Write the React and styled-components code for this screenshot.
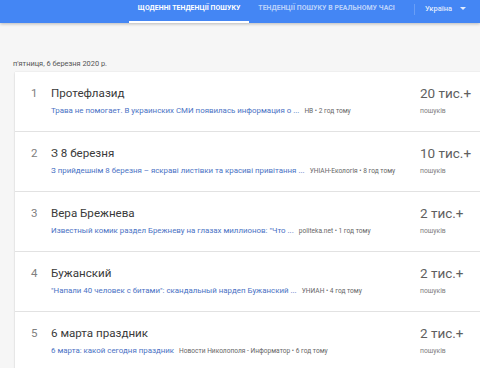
import React from 'react';
import styled, { createGlobalStyle } from 'styled-components';

const GlobalStyle = createGlobalStyle`
  body {
    margin: 0;
    background: #f6f6f6;
    font-family: Roboto, "Liberation Sans", Arial, sans-serif;
    overflow: hidden;
  }
`;

const Page = styled.div`
  width: 480px;
  height: 368px;
  overflow: hidden;
`;

const Header = styled.div`
  height: 23px;
  background: #4486f4;
  display: flex;
  align-items: stretch;
  padding-right: 14px;
  box-shadow: 0 1px 3px rgba(0, 0, 0, 0.25);
  position: relative;
  z-index: 1;
`;

const Spacer = styled.div`
  flex: 1;
`;

const Tab = styled.div`
  display: flex;
  align-items: center;
  padding: 0 9px 6px;
  font-size: 6.9px;
  font-weight: 700;
  letter-spacing: 0.05px;
  text-transform: uppercase;
  white-space: nowrap;
  color: ${({ active }) => (active ? '#ffffff' : 'rgba(255,255,255,0.65)')};
  border-bottom: 2px solid ${({ active }) => (active ? '#ffffff' : 'transparent')};
  box-sizing: border-box;
`;

const Divider = styled.div`
  width: 1px;
  margin: 4px 10px 8px;
  background: rgba(255, 255, 255, 0.2);
`;

const Region = styled.div`
  display: flex;
  align-items: center;
  gap: 8px;
  padding-bottom: 6px;
  font-size: 7.5px;
  font-weight: 500;
  color: rgba(255, 255, 255, 0.85);
`;

const Caret = styled.span`
  width: 0;
  height: 0;
  border-left: 3px solid transparent;
  border-right: 3px solid transparent;
  border-top: 3px solid rgba(255, 255, 255, 0.85);
`;

const Content = styled.div`
  padding: 35px 0 0 15px;
`;

const DateLabel = styled.div`
  font-size: 7.4px;
  color: #555;
  margin: 0 0 2px -2px;
  line-height: 12px;
`;

const Card = styled.div`
  background: #fff;
  margin-right: -10px;
  box-shadow: 0 1px 2px rgba(0, 0, 0, 0.12), 0 0 1px rgba(0, 0, 0, 0.12);
`;

const Row = styled.div`
  display: grid;
  grid-template-columns: 20px 1fr 70px;
  padding: 13px 0 14px 16px;
  border-bottom: 1px solid #e2e2e2;
  height: 60px;
  box-sizing: border-box;
`;

const Rank = styled.div`
  font-size: 11.5px;
  line-height: 16px;
  color: #808080;
`;

const Main = styled.div`
  min-width: 0;
`;

const Title = styled.div`
  font-size: 11.6px;
  line-height: 16px;
  color: #3a3a3a;
  margin-bottom: 4px;
`;

const Sub = styled.div`
  font-size: 7.9px;
  line-height: 12px;
  white-space: nowrap;
`;

const Link = styled.span`
  color: #4a72c4;
`;

const Source = styled.span`
  color: #666;
  font-size: 6.6px;
  margin-left: 5px;
`;

const Count = styled.div``;

const Amount = styled.div`
  font-size: 13.5px;
  line-height: 16px;
  color: #5f5f5f;
  margin-bottom: 4px;
`;

const Searches = styled.div`
  font-size: 6.8px;
  line-height: 12px;
  color: #808080;
`;

const items = [
  {
    title: 'Протефлазид',
    link: 'Трава не помогает. В украинских СМИ появилась информация о ...',
    source: 'НВ • 2 год тому',
    count: '20 тис.+',
  },
  {
    title: 'З 8 березня',
    link: 'З прийдешнім 8 березня – яскраві листівки та красиві привітання ...',
    source: 'УНІАН-Екологія • 8 год тому',
    count: '10 тис.+',
  },
  {
    title: 'Вера Брежнева',
    link: 'Известный комик раздел Брежневу на глазах миллионов: "Что ...',
    source: 'politeka.net • 1 год тому',
    count: '2 тис.+',
  },
  {
    title: 'Бужанский',
    link: '"Напали 40 человек с битами": скандальный нардеп Бужанский ...',
    source: 'УНИАН • 4 год тому',
    count: '2 тис.+',
  },
  {
    title: '6 марта праздник',
    link: '6 марта: какой сегодня праздник',
    source: 'Новости Николополя - Информатор • 6 год тому',
    count: '2 тис.+',
  },
];

export default function App() {
  return (
    <Page>
      <GlobalStyle />
      <Header>
        <Spacer />
        <Tab active>Щоденні тенденції пошуку</Tab>
        <Tab>Тенденції пошуку в реальному часі</Tab>
        <Divider />
        <Region>
          Україна
          <Caret />
        </Region>
      </Header>
      <Content>
        <DateLabel>п&apos;ятниця, 6 березня 2020 р.</DateLabel>
        <Card>
          {items.map((item, i) => (
            <Row key={item.title}>
              <Rank>{i + 1}</Rank>
              <Main>
                <Title>{item.title}</Title>
                <Sub>
                  <Link>{item.link}</Link>
                  <Source>{item.source}</Source>
                </Sub>
              </Main>
              <Count>
                <Amount>{item.count}</Amount>
                <Searches>пошуків</Searches>
              </Count>
            </Row>
          ))}
        </Card>
      </Content>
    </Page>
  );
}
